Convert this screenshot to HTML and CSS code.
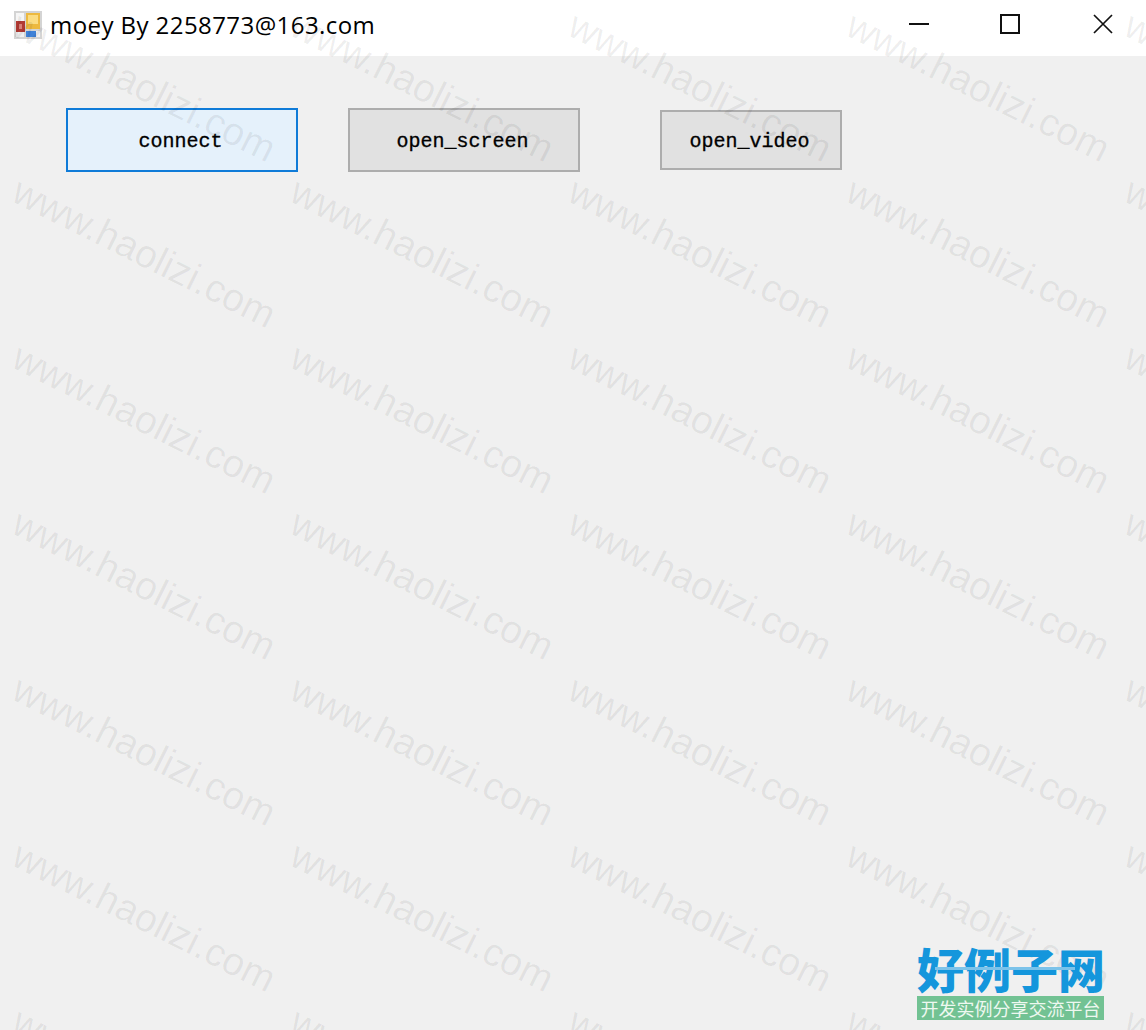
FILE: index.html
```html
<!DOCTYPE html>
<html lang="zh">
<head>
  <meta charset="UTF-8">
  <title>moey By 2258773@163.com</title>
  <meta name="viewport" content="width=device-width, initial-scale=1.0">
  <link rel="stylesheet" href="styles.css">
</head>
<body>

<div class="window">
  <div class="titlebar">
    <svg class="app-icon" width="28" height="28" viewBox="0 0 28 28">
      <rect x="0" y="0" width="28" height="28" fill="#d4d4d4"/>
      <rect x="2" y="2" width="8" height="8" fill="#f6f6f6"/>
      <rect x="2" y="21" width="8" height="5" fill="#f0f0f0"/>
      <rect x="22" y="20" width="4" height="6" fill="#f0f0f0"/>
      <rect x="2" y="10" width="9" height="11" fill="#b23a34"/>
      <rect x="5" y="13" width="3" height="5" fill="#d98078"/>
      <rect x="12" y="2" width="14" height="16" fill="#edb93f"/>
      <rect x="14" y="4" width="10" height="9" fill="#fbdc82"/>
      <rect x="12" y="20" width="10" height="6" fill="#3f82d8"/>
    </svg>
    <span class="title-text">moey By 2258773@163.com</span>
    <div class="window-controls">
      <svg class="control control-min" width="20" height="20" viewBox="0 0 20 20"><path d="M0 10H20" stroke="#111" stroke-width="2"/></svg>
      <svg class="control" width="20" height="20" viewBox="0 0 20 20"><rect x="1" y="1" width="18" height="18" fill="none" stroke="#111" stroke-width="2"/></svg>
      <svg class="control" width="20" height="20" viewBox="0 0 20 20"><path d="M1 1L19 19M19 1L1 19" stroke="#111" stroke-width="1.7"/></svg>
    </div>
  </div>

  <div class="form-body">
    <button class="btn btn-focus"><span>connect</span></button>
    <button class="btn btn-screen"><span>open_screen</span></button>
    <button class="btn btn-video"><span>open_video</span></button>
  </div>
</div>

<div class="watermarks">
  <span>www.haolizi.com</span><span>www.haolizi.com</span><span>www.haolizi.com</span><span>www.haolizi.com</span><span>www.haolizi.com</span>
  <span>www.haolizi.com</span><span>www.haolizi.com</span><span>www.haolizi.com</span><span>www.haolizi.com</span><span>www.haolizi.com</span>
  <span>www.haolizi.com</span><span>www.haolizi.com</span><span>www.haolizi.com</span><span>www.haolizi.com</span><span>www.haolizi.com</span>
  <span>www.haolizi.com</span><span>www.haolizi.com</span><span>www.haolizi.com</span><span>www.haolizi.com</span><span>www.haolizi.com</span>
  <span>www.haolizi.com</span><span>www.haolizi.com</span><span>www.haolizi.com</span><span>www.haolizi.com</span><span>www.haolizi.com</span>
  <span>www.haolizi.com</span><span>www.haolizi.com</span><span>www.haolizi.com</span><span>www.haolizi.com</span><span>www.haolizi.com</span>
  <span>www.haolizi.com</span><span>www.haolizi.com</span><span>www.haolizi.com</span><span>www.haolizi.com</span><span>www.haolizi.com</span>
</div>

<div class="site-logo">
  <div class="logo-name">好例子网</div>
  <div class="logo-slogan">开发实例分享交流平台</div>
</div>

</body>
</html>
```

FILE: styles.css
```css
html, body {
  margin: 0;
  height: 100%;
  overflow: hidden;
}

body {
  position: relative;
  background: #f0f0f0;
  font-family: "Open Sans", sans-serif;
}

.titlebar {
  display: flex;
  align-items: center;
  height: 56px;
  padding-left: 14px;
  background: #fff;
}

.app-icon {
  margin-top: -6px;
  margin-right: 8px;
}

.title-text {
  margin-top: -7px;
  font-size: 24px;
  letter-spacing: 0.43px;
  color: #000;
}

.window-controls {
  display: flex;
  gap: 73px;
  margin-left: auto;
  margin-right: 33px;
  margin-top: -8px;
}

.control-min {
  margin-right: -2px;
}

.form-body {
  display: flex;
  align-items: center;
  padding: 52px 0 0 66px;
}

.btn {
  box-sizing: border-box;
  width: 232px;
  height: 64px;
  padding: 0 3px 0 0;
  background: #e1e1e1;
  border: 2px solid #adadad;
  font-family: "Liberation Mono", monospace;
  font-size: 20px;
  color: #000;
  -webkit-text-stroke: 0.3px #000;
}

.btn span {
  display: block;
  padding-top: 3px;
}

.btn-focus {
  background: #e5f1fb;
  border-color: #0f7bd8;
}

.btn-screen {
  margin-left: 50px;
}

.btn-video {
  width: 182px;
  height: 60px;
  margin-left: 80px;
}

.watermarks {
  position: absolute;
  top: 0;
  left: 0;
  display: grid;
  grid-template-columns: repeat(5, 278px);
  grid-auto-rows: 166px;
  margin-top: 3px;
  margin-left: 25px;
  pointer-events: none;
}

.watermarks span {
  width: 278px;
  height: 166px;
  font-family: "Liberation Sans", sans-serif;
  font-size: 39px;
  line-height: 44px;
  white-space: nowrap;
  color: rgba(0, 0, 0, 0.065);
  transform: rotate(26.5deg);
  transform-origin: 0 0;
}

.site-logo {
  position: absolute;
  left: 917px;
  top: 942px;
  width: 187px;
}

.logo-name {
  position: relative;
  height: 54px;
  font-family: "Noto Sans CJK SC", sans-serif;
  font-size: 47px;
  font-weight: 900;
  line-height: 52px;
  white-space: nowrap;
  color: #1496dc;
}

.logo-name::before {
  content: "";
  position: absolute;
  top: 25px;
  left: 18px;
  width: 140px;
  height: 3px;
  background: #7cc3ea;
}

.logo-slogan {
  height: 24px;
  background: #72c293;
  font-family: "Noto Sans CJK SC", sans-serif;
  font-size: 18px;
  line-height: 24px;
  text-align: center;
  white-space: nowrap;
  color: #eef8f0;
}
```
